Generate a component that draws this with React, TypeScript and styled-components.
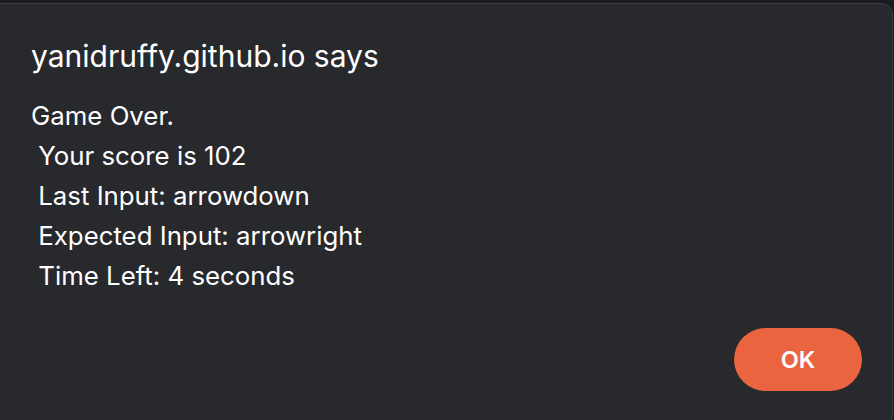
import React from "react";
import styled, { createGlobalStyle } from "styled-components";

const Global = createGlobalStyle`
  html, body { margin: 0; padding: 0; background: #1b1c1f; }
  body { width: 894px; height: 420px; overflow: hidden; font-family: Inter, "Noto Sans", sans-serif; }
`;

const Page = styled.div`
  width: 894px;
  height: 420px;
  padding-top: 3px;
  box-sizing: border-box;
  display: flex;
  overflow: hidden;
`;

const Dialog = styled.div`
  margin-left: -20px;
  width: 913px;
  height: 424px;
  box-sizing: border-box;
  background: #28292d;
  border: 1px solid #3a3b3f;
  border-radius: 12px;
  padding: 34px 30px 0 50px;
  display: flex;
  flex-direction: column;
  color: #ffffff;
`;

const Title = styled.div`
  font-size: 30px;
  line-height: 36px;
  font-weight: 400;
`;

const Message = styled.div`
  margin-top: 22px;
  font-size: 25.8px;
  line-height: 40px;
  white-space: pre-wrap;
`;

const Footer = styled.div`
  margin-top: 32px;
  display: flex;
  justify-content: flex-end;
`;

const OkButton = styled.button`
  width: 128px;
  height: 63px;
  border: none;
  border-radius: 32px;
  background: #e9643f;
  color: #ffffff;
  font-family: Inter, "Noto Sans", sans-serif;
  font-size: 23.5px;
  font-weight: 600;
  cursor: pointer;
`;

const lines = [
  "Game Over.",
  " Your score is 102",
  " Last Input: arrowdown",
  " Expected Input: arrowright",
  " Time Left: 4 seconds",
];

export default function App() {
  return (
    <>
      <Global />
      <Page>
        <Dialog>
          <Title>yanidruffy.github.io says</Title>
          <Message>{lines.join("\n")}</Message>
          <Footer>
            <OkButton>OK</OkButton>
          </Footer>
        </Dialog>
      </Page>
    </>
  );
}
